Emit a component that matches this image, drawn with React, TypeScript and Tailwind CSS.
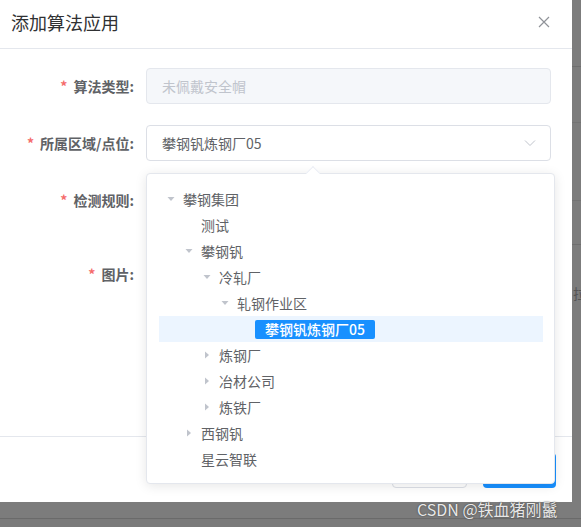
import React from 'react';

type TreeNode = {
  label: string;
  level: number;
  expanded?: boolean;
  leaf?: boolean;
  current?: boolean;
};

const nodes: TreeNode[] = [
  { label: '攀钢集团', level: 0, expanded: true },
  { label: '测试', level: 1, leaf: true },
  { label: '攀钢钒', level: 1, expanded: true },
  { label: '冷轧厂', level: 2, expanded: true },
  { label: '轧钢作业区', level: 3, expanded: true },
  { label: '攀钢钒炼钢厂05', level: 4, leaf: true, current: true },
  { label: '炼钢厂', level: 2 },
  { label: '冶材公司', level: 2 },
  { label: '炼铁厂', level: 2 },
  { label: '西钢钒', level: 1 },
  { label: '星云智联', level: 1, leaf: true },
];

const font = { fontFamily: '"Noto Sans CJK SC", "Noto Sans", sans-serif' };

function Caret({ expanded }: { expanded?: boolean }) {
  return (
    <svg width="12" height="12" viewBox="0 0 12 12" className={expanded ? 'rotate-90' : ''}>
      <path d="M4 2.5 L8 6 L4 9.5 Z" fill="#c0c4cc" />
    </svg>
  );
}

function Label({ text }: { text: string }) {
  return (
    <div className="w-[146px] shrink-0 pr-[12px] text-right text-[14px] leading-[36px] font-bold text-[#606266]">
      <span className="mr-[6px] text-[#f56c6c]">*</span>
      {text}
    </div>
  );
}

function TreeRow({ node }: { node: TreeNode }) {
  return (
    <div
      className={`flex h-[26px] items-center ${node.current ? 'bg-[#ecf5ff]' : ''}`}
      style={{ paddingLeft: node.level * 18 }}
    >
      <span className="flex w-[24px] shrink-0 justify-center">
        {!node.leaf && <Caret expanded={node.expanded} />}
      </span>
      {node.current ? (
        <span className="rounded-[2px] bg-[#1890ff] px-[10px] text-[14px] leading-[19px] font-medium text-white">
          {node.label}
        </span>
      ) : (
        <span className="text-[14px] text-[#606266]">{node.label}</span>
      )}
    </div>
  );
}

export default function App() {
  return (
    <div className="relative flex h-[527px] w-[581px] flex-col overflow-hidden bg-[#7c7c7c]" style={font}>
      <div className="flex h-[502px]">
        <div className="flex w-[572px] shrink-0 flex-col bg-white">
          <div className="flex h-[49px] items-center justify-between border-b border-[#e4e7ed] pb-[4px] pl-[11px] pr-[22px]">
            <span className="text-[18px] text-[#303133]">添加算法应用</span>
            <svg width="12" height="12" viewBox="0 0 12 12">
              <path d="M1 1 L11 11 M11 1 L1 11" stroke="#909399" strokeWidth="1.2" />
            </svg>
          </div>

          <div className="flex flex-1 flex-col gap-[21px] pr-[21px] pt-[19px]">
            <div className="flex">
              <Label text="算法类型:" />
              <div className="flex h-[36px] flex-1 items-center rounded-[4px] border border-[#e4e7ed] bg-[#f5f7fa] pl-[15px] text-[14px] text-[#c0c4cc]">
                未佩戴安全帽
              </div>
            </div>
            <div className="flex">
              <Label text="所属区域/点位:" />
              <div className="flex h-[36px] flex-1 items-center justify-between rounded-[4px] border border-[#dcdfe6] pl-[15px] pr-[14px] text-[14px] text-[#606266]">
                <span>攀钢钒炼钢厂05</span>
                <svg width="12" height="8" viewBox="0 0 12 8">
                  <path d="M1 1.5 L6 6.5 L11 1.5" fill="none" stroke="#c0c4cc" strokeWidth="1" />
                </svg>
              </div>
            </div>
            <div className="flex">
              <Label text="检测规则:" />
              <div className="h-[53px] flex-1" />
            </div>
            <div className="flex">
              <Label text="图片:" />
              <div className="h-[36px] flex-1" />
            </div>
          </div>

          <div className="flex h-[66px] justify-end gap-[16px] border-t border-[#e4e7ed] pr-[16px] pt-[16px]">
            <button className="h-[35px] w-[75px] rounded-[4px] border border-[#dcdfe6] text-[14px] text-[#606266]">
              取 消
            </button>
            <button className="h-[35px] w-[73px] rounded-[4px] bg-[#1890ff] text-[14px] text-white">
              确 定
            </button>
          </div>
        </div>

        <div className="flex min-w-0 flex-1 flex-col overflow-hidden">
          <div className="h-[67px] shrink-0 border-b border-[#6e6e6e]" />
          <div className="h-[56px] shrink-0 border-b border-[#737373]" />
          <div className="h-[78px] shrink-0 border-b border-[#737373]" />
          <div className="h-[44px] shrink-0 border-b border-[#6e6e6e]" />
          <div className="whitespace-nowrap pl-[1px] pt-[38px] text-[14px] text-[#555]">拉</div>
        </div>
      </div>
      <div className="h-[16px]" />
      <div className="flex-1 border-t border-[#6a6a6a] bg-[#7a7a7a]" />

      {/* tree select dropdown */}
      <div className="absolute left-[146px] top-[173px] h-[311px] w-[409px] rounded-[4px] border border-[#e4e7ed] bg-white pl-[12px] pr-[11px] pt-[12px] shadow-[0_2px_12px_0_rgba(0,0,0,0.1)]">
        <div className="absolute -top-[6px] left-[161px] h-[10px] w-[10px] rotate-45 border-l border-t border-[#ebeef5] bg-white" />
        {nodes.map((n) => (
          <TreeRow key={n.label} node={n} />
        ))}
      </div>

      <div
        className="absolute left-[417px] top-[497px] text-[16px] text-[#e8e8e8]"
        style={{ textShadow: '0 0 2px #555, 0 0 1px #444' }}
      >
        CSDN @铁血猪刚鬣
      </div>
    </div>
  );
}
